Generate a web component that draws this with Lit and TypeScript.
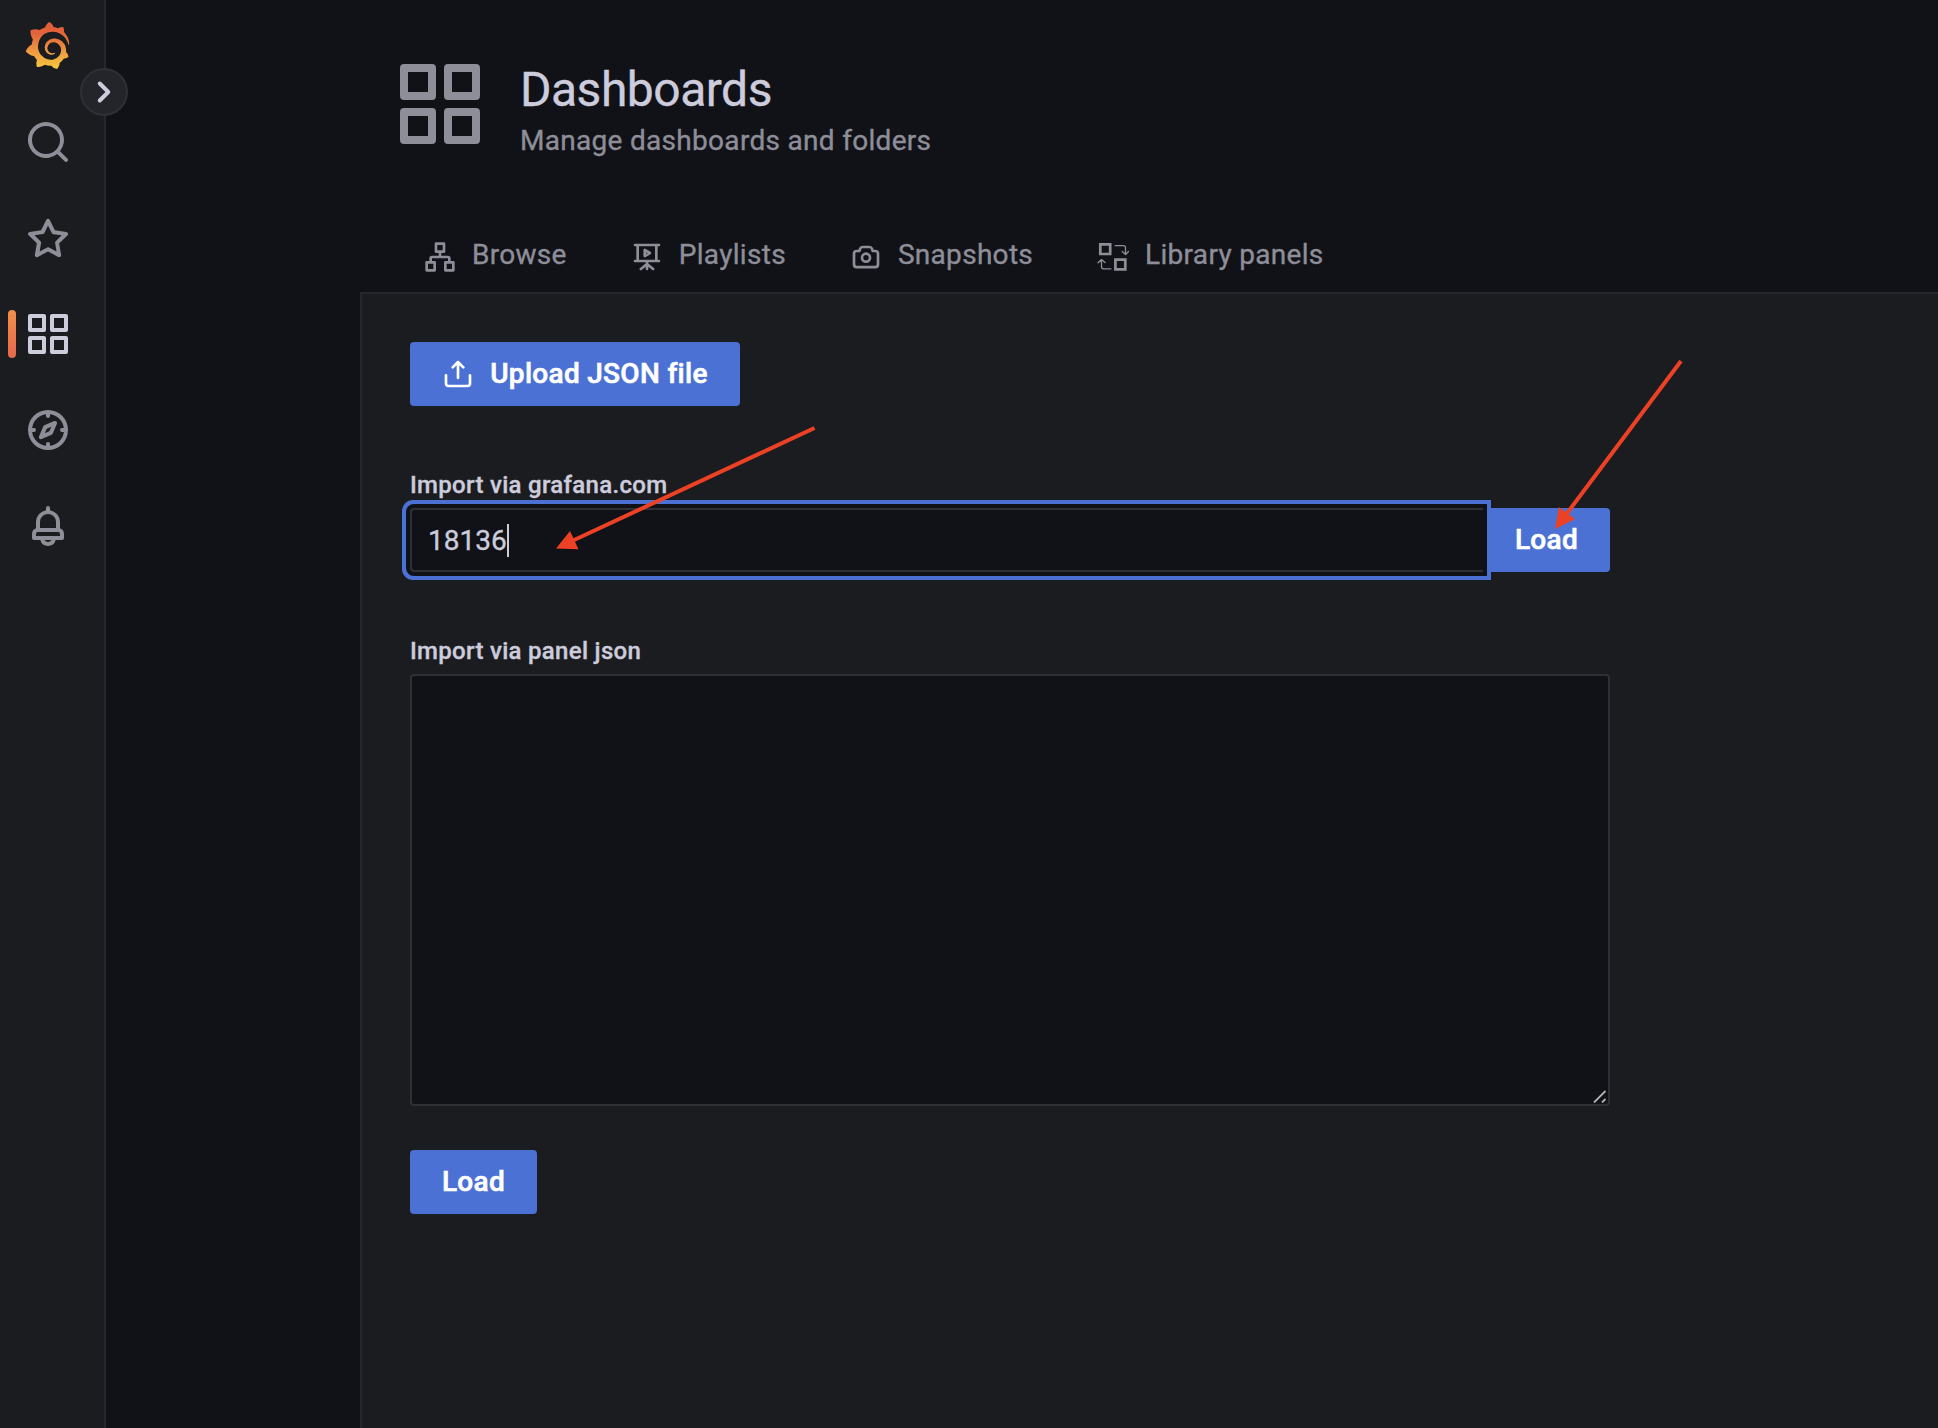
import { LitElement, html, css, svg } from "lit";
import { customElement } from "lit/decorators.js";

const fill = (d: string) => svg`<path fill="currentColor" d=${d} />`;

const SEARCH = fill("M21.71,20.29,18,16.61A9,9,0,1,0,16.61,18l3.68,3.68a1,1,0,0,0,1.42,0A1,1,0,0,0,21.71,20.29ZM11,18a7,7,0,1,1,7-7A7,7,0,0,1,11,18Z");
const STAR = fill("M22,9.67A1,1,0,0,0,21.14,9l-5.69-.83L12.9,3a1,1,0,0,0-1.8,0L8.55,8.16,2.86,9a1,1,0,0,0-.81.68,1,1,0,0,0,.25,1l4.13,4-1,5.68A1,1,0,0,0,6.9,21.44L12,18.77l5.1,2.67a.93.93,0,0,0,.46.12,1,1,0,0,0,.59-.19,1,1,0,0,0,.4-1l-1-5.68,4.13-4A1,1,0,0,0,22,9.67Zm-6.15,4a1,1,0,0,0-.29.88l.72,4.2-3.76-2a1.06,1.06,0,0,0-.94,0l-3.76,2,.72-4.2a1,1,0,0,0-.29-.88l-3-3,4.21-.61a1,1,0,0,0,.76-.55L12,5.7l1.88,3.82a1,1,0,0,0,.76.55l4.21.61Z");
const APPS = fill("M10,13H3a1,1,0,0,0-1,1v7a1,1,0,0,0,1,1h7a1,1,0,0,0,1-1V14A1,1,0,0,0,10,13ZM9,20H4V15H9ZM21,2H14a1,1,0,0,0-1,1v7a1,1,0,0,0,1,1h7a1,1,0,0,0,1-1V3A1,1,0,0,0,21,2ZM20,9H15V4h5Zm1,4H14a1,1,0,0,0-1,1v7a1,1,0,0,0,1,1h7a1,1,0,0,0,1-1V14A1,1,0,0,0,21,13Zm-1,7H15V15h5ZM10,2H3A1,1,0,0,0,2,3v7a1,1,0,0,0,1,1h7a1,1,0,0,0,1-1V3A1,1,0,0,0,10,2ZM9,9H4V4H9Z");
const COMPASS = fill("M12,2A10,10,0,1,0,22,12,10,10,0,0,0,12,2Zm1,17.93V19a1,1,0,0,0-2,0v.93A8,8,0,0,1,4.07,13H5a1,1,0,0,0,0-2H4.07A8,8,0,0,1,11,4.07V5a1,1,0,0,0,2,0V4.07A8,8,0,0,1,19.93,11H19a1,1,0,0,0,0,2h.93A8,8,0,0,1,13,19.93ZM15.14,7.55l-5,2.12a1,1,0,0,0-.52.52l-2.12,5a1,1,0,0,0,.21,1.1,1,1,0,0,0,.7.29.93.93,0,0,0,.4-.08l5-2.12a1,1,0,0,0,.52-.52l2.12-5a1,1,0,0,0-1.31-1.31Zm-2.49,5.1-2.28,1,1-2.28,2.28-1Z");
const BELL = fill("M18,13.18V10a6,6,0,0,0-5-5.91V3a1,1,0,0,0-2,0V4.09A6,6,0,0,0,6,10v3.18A3,3,0,0,0,4,16v2a1,1,0,0,0,1,1H8.14a4,4,0,0,0,7.72,0H19a1,1,0,0,0,1-1V16A3,3,0,0,0,18,13.18ZM8,10a4,4,0,0,1,8,0v3H8Zm4,10a2,2,0,0,1-1.72-1h3.44A2,2,0,0,1,12,20Zm6-3H6V16a1,1,0,0,1,1-1H17a1,1,0,0,1,1,1Z");
const CAMERA = fill("M19,6.5H17.72l-.32-1a3,3,0,0,0-2.84-2H9.44A3,3,0,0,0,6.6,5.55l-.32,1H5a3,3,0,0,0-3,3v8a3,3,0,0,0,3,3H19a3,3,0,0,0,3-3v-8A3,3,0,0,0,19,6.5Zm1,11a1,1,0,0,1-1,1H5a1,1,0,0,1-1-1v-8a1,1,0,0,1,1-1H7a1,1,0,0,0,1-.68l.54-1.64a1,1,0,0,1,.95-.68h5.12a1,1,0,0,1,.95.68l.54,1.64A1,1,0,0,0,17,8.5h2a1,1,0,0,1,1,1Zm-8-9a4,4,0,1,0,4,4A4,4,0,0,0,12,8.5Zm0,6a2,2,0,1,1,2-2A2,2,0,0,1,12,14.5Z");
const UPLOAD = fill("M8.71,7.71,11,5.41V15a1,1,0,0,0,2,0V5.41l2.29,2.3a1,1,0,0,0,1.42,0,1,1,0,0,0,0-1.42l-4-4a1,1,0,0,0-.33-.21,1,1,0,0,0-.76,0,1,1,0,0,0-.33.21l-4,4A1,1,0,1,0,8.71,7.71ZM21,12a1,1,0,0,0-1,1v6a1,1,0,0,1-1,1H5a1,1,0,0,1-1-1V13a1,1,0,0,0-2,0v6a3,3,0,0,0,3,3H19a3,3,0,0,0,3-3V13A1,1,0,0,0,21,12Z");
const ANGLE = fill("M14.83,11.29,10.59,7.05a1,1,0,0,0-1.42,0,1,1,0,0,0,0,1.41L12.71,12,9.17,15.54a1,1,0,0,0,0,1.41,1,1,0,0,0,.71.29,1,1,0,0,0,.71-.29l4.24-4.24A1,1,0,0,0,14.83,11.29Z");
const SITEMAP = svg`<g fill="none" stroke="currentColor" stroke-width="2" stroke-linejoin="round">
  <rect x="9" y="2" width="6" height="6" /><rect x="2" y="16" width="6" height="6" /><rect x="16" y="16" width="6" height="6" />
  <path d="M12 8v4M5 16v-3a1 1 0 0 1 1-1h12a1 1 0 0 1 1 1v3" /></g>`;
const PRESENTATION = svg`<g fill="none" stroke="currentColor" stroke-width="2" stroke-linecap="round" stroke-linejoin="round">
  <path d="M3 3h18M5 3v12M19 3v12M3 15h18M12 15v6M12 17.3L7.4 21M12 17.3l4.600 3.700" /><path d="M10.300 6.700v4.600l3.900-2.300z" /></g>`;
const LIBRARY = svg`<g fill="none" stroke="currentColor">
  <path stroke-width="2.700" d="M3.300 3.400h9.900v9.600h-9.900zM18.400 18.700h9.900v9.600h-9.900z" />
  <path stroke-width="1.300" stroke-linecap="round" stroke-linejoin="round" d="M18.300 4.700h8.200a2 2 0 0 1 2 2v6.500M25.200 10.500l3.400 3 2.900-3M14 27.800h-7.500a2 2 0 0 1-2-2v-6.500M1 21.800l3.500-3.200 3.500 3" /></g>`;
const LOGO = "M23.02 10.59a8.578 8.578 0 0 0-.862-3.034 8.911 8.911 0 0 0-1.789-2.445c.337-1.342-.413-2.505-.413-2.505-1.292-.08-2.113.4-2.416.62-.052-.02-.102-.044-.154-.064-.22-.089-.446-.172-.677-.247-.231-.073-.47-.14-.711-.197a9.867 9.867 0 0 0-.875-.161C14.557.753 12.94 0 12.94 0c-1.804 1.145-2.147 2.744-2.147 2.744l-.018.093c-.098.029-.2.057-.298.088-.138.042-.275.094-.413.143-.138.055-.275.107-.41.166a8.869 8.869 0 0 0-1.557.87l-.063-.029c-2.497-.955-4.716.195-4.716.195-.203 2.658.996 4.33 1.235 4.636a11.608 11.608 0 0 0-.607 2.635C1.636 12.677.953 15.014.953 15.014c1.926 2.214 4.171 2.351 4.171 2.351.003-.002.006-.002.006-.005.285.509.615.994.986 1.446.156.19.32.371.488.548-.704 2.009.099 3.68.099 3.68 2.144.08 3.553-.937 3.849-1.173a9.784 9.784 0 0 0 3.164.501h.08l.055-.003.107-.002.103-.005.003.002c1.01 1.44 2.788 1.646 2.788 1.646 1.264-1.332 1.337-2.653 1.337-2.94v-.058c0-.02-.003-.039-.003-.06.265-.187.52-.387.758-.6a7.875 7.875 0 0 0 1.415-1.7c1.43.083 2.437-.885 2.437-.885-.236-1.49-1.085-2.216-1.264-2.354l-.018-.013-.016-.013a.217.217 0 0 1-.031-.02c.008-.092.016-.18.02-.27.011-.162.016-.323.016-.48v-.253l-.005-.098-.008-.135a1.891 1.891 0 0 0-.01-.13c-.003-.042-.008-.083-.013-.125l-.016-.124-.018-.122a6.215 6.215 0 0 0-2.032-3.73 6.015 6.015 0 0 0-3.222-1.46 6.292 6.292 0 0 0-.85-.048l-.107.002h-.063l-.044.003-.104.008a4.777 4.777 0 0 0-3.335 1.695c-.332.4-.592.84-.768 1.297a4.594 4.594 0 0 0-.312 1.817l.003.091c.005.055.007.11.013.164a3.615 3.615 0 0 0 .698 1.82 3.53 3.53 0 0 0 1.827 1.282c.33.098.66.14.971.137.039 0 .078 0 .114-.002l.063-.003c.02 0 .041-.003.062-.003.034-.002.065-.007.099-.01.007 0 .018-.003.028-.003l.031-.005.06-.008a1.18 1.18 0 0 0 .112-.02c.036-.008.072-.013.109-.024a2.634 2.634 0 0 0 .914-.415c.028-.02.056-.041.085-.065a.248.248 0 0 0 .039-.35.244.244 0 0 0-.309-.06l-.078.042c-.09.044-.184.083-.283.116a2.476 2.476 0 0 1-.475.096c-.028.003-.054.006-.083.006l-.083.002c-.026 0-.054 0-.08-.002l-.102-.006h-.012l-.024.006c-.016-.003-.031-.003-.044-.006-.031-.002-.06-.007-.091-.01a2.59 2.59 0 0 1-.724-.213 2.557 2.557 0 0 1-.667-.438 2.52 2.52 0 0 1-.805-1.475 2.306 2.306 0 0 1-.029-.444l.006-.122v-.023l.002-.031c.003-.021.003-.04.005-.06a3.163 3.163 0 0 1 1.352-2.29 3.12 3.12 0 0 1 .937-.43 2.946 2.946 0 0 1 .776-.101h.06l.07.002.045.003h.026l.07.005a4.041 4.041 0 0 1 1.635.49 3.94 3.94 0 0 1 1.602 1.662 3.77 3.77 0 0 1 .397 1.414l.005.076.003.075c.002.026.002.05.002.075 0 .024.003.052 0 .07v.065l-.002.073-.008.174a6.195 6.195 0 0 1-.08.639 5.1 5.1 0 0 1-.267.927 5.31 5.31 0 0 1-.624 1.13 5.052 5.052 0 0 1-3.237 2.014 4.82 4.82 0 0 1-.649.066l-.039.003h-.287a6.607 6.607 0 0 1-1.716-.265 6.776 6.776 0 0 1-3.4-2.274 6.75 6.75 0 0 1-.746-1.15 6.616 6.616 0 0 1-.714-2.596l-.005-.083-.002-.02v-.056l-.003-.073v-.096l-.003-.104v-.07l.003-.163c.008-.22.026-.45.054-.678a8.707 8.707 0 0 1 .28-1.355c.128-.444.286-.872.473-1.277a7.04 7.04 0 0 1 1.456-2.1 5.925 5.925 0 0 1 .953-.763c.169-.111.343-.213.524-.306.089-.05.182-.091.273-.135.047-.02.093-.042.138-.062a7.177 7.177 0 0 1 .714-.267l.145-.045c.049-.015.098-.026.148-.041.098-.029.197-.052.296-.076.049-.013.1-.02.15-.033l.15-.032.151-.028.076-.013.075-.01.153-.024c.057-.01.114-.013.171-.023l.169-.021c.036-.003.073-.008.106-.01l.073-.008.036-.003.042-.002c.057-.003.114-.008.171-.01l.086-.006h.023l.037-.003.145-.007a7.999 7.999 0 0 1 1.708.125 7.917 7.917 0 0 1 2.048.68 8.253 8.253 0 0 1 1.672 1.09l.09.077.089.078c.06.052.114.107.171.159.057.052.112.106.166.16.052.055.107.107.159.164a8.671 8.671 0 0 1 1.41 1.978c.012.026.028.052.04.078l.04.078.075.156c.023.051.05.1.07.153l.065.15a8.848 8.848 0 0 1 .45 1.34.19.19 0 0 0 .201.142.186.186 0 0 0 .172-.184c.01-.246.002-.532-.024-.856z";

const icon = (body: unknown, cls: string, box = 24) =>
  html`<svg class="icon ${cls}" viewBox="0 0 ${box} ${box}">${body}</svg>`;

@customElement("app-root")
export class AppRoot extends LitElement {
  static styles = css`
    :host {
      display: block;
      font-family: Roboto, "Liberation Sans", sans-serif;
      font-size: 28px;
      letter-spacing: 0.01071em;
      color: #ccccdc;
      -webkit-text-stroke: 0.35px currentColor;
    }
    * { box-sizing: border-box; }
    .page {
      position: relative;
      display: flex;
      width: 1938px;
      height: 1428px;
      overflow: hidden;
      background: #111217;
    }
    .icon { display: block; flex: none; }
    .i32 { width: 32px; height: 32px; }
    .i48 { width: 48px; height: 48px; }
    .i96 { width: 96px; height: 96px; color: #8e8e99; }

    .side {
      position: relative;
      flex: none;
      width: 106px;
      border-right: 2px solid #26272c;
      background: #1b1c20;
      color: #8e8e99;
      padding: 22px 0 0 24px;
    }
    .logo { display: block; width: 47px; height: 47px; }
    .nav { display: flex; flex-direction: column; gap: 48px; margin-top: 49px; }
    .item { position: relative; height: 48px; }
    .on { color: #ccccdc; }
    .on::before {
      content: "";
      position: absolute;
      left: -16px;
      top: 0;
      width: 8px;
      height: 48px;
      border-radius: 4px;
      background: linear-gradient(#f08f4a, #e5684b);
    }
    .toggle {
      position: absolute;
      left: 80px;
      top: 68px;
      width: 48px;
      height: 48px;
      border-radius: 50%;
      border: 2px solid #2f3036;
      background: #24252a;
      color: #ccccdc;
      display: flex;
      align-items: center;
      justify-content: center;
    }
    .angle { width: 48px; height: 48px; }

    .main { flex: 1; display: flex; flex-direction: column; padding-left: 254px; }
    .head { display: flex; height: 152px; padding: 56px 0 0 32px; }
    .titles { margin-left: 32px; }
    h1 {
      margin: 5px 0 0;
      font-size: 48px;
      font-weight: 400;
      line-height: 58px;
      letter-spacing: -0.5px;
    }
    .sub { line-height: 44px; color: #8e8e99; }
    .tabs { display: flex; gap: 64px; height: 140px; padding: 81px 0 0 64px; color: #8e8e99; }
    .tab { display: flex; gap: 16px; line-height: 44px; }
    .tab .icon { margin-top: 8px; }
    .panel {
      flex: 1;
      border: solid #26272c;
      border-width: 2px 0 0 2px;
      background: #1b1c20;
      padding: 48px 0 0 48px;
    }
    .btn {
      display: flex;
      align-items: center;
      flex: none;
      height: 64px;
      width: 127px;
      justify-content: center;
      border-radius: 4px;
      background: #4a71d3;
      color: #fff;
      font-weight: 500;
      line-height: 64px;
      -webkit-text-stroke-width: 0.6px;
    }
    .upload { width: 330px; gap: 16px; }
    .label { font-size: 24px; font-weight: 500; line-height: 32px; }
    .l1 { margin-top: 63px; }
    .l2 { margin-top: 63px; }
    .row { display: flex; width: 1200px; margin-top: 7px; }
    .input {
      position: relative;
      flex: 1;
      display: flex;
      align-items: center;
      height: 64px;
      padding: 0 16px;
      border: 2px solid #2f3036;
      border-right: 0;
      border-radius: 4px 0 0 4px;
      background: #111217;
      box-shadow: 0 0 0 4px #111217, 0 0 0 8px #4a71d3;
      letter-spacing: 0;
    }
    .caret { width: 2px; height: 33px; background: #ccccdc; margin-top: 1px; }
    .row .btn { border-radius: 0 4px 4px 0; }
    .area {
      width: 1200px;
      height: 432px;
      margin: 7px 0 44px;
      border: 2px solid #2f3036;
      border-radius: 4px;
      background: #111217;
      display: flex;
      align-items: flex-end;
      justify-content: flex-end;
      padding: 1px 2px;
    }
    .grip { width: 13px; height: 13px; }
    .arrows { position: absolute; left: 0; top: 0; width: 1938px; height: 1428px; }
  `;

  render() {
    return html`<div class="page">
      <nav class="side">
        <svg class="logo" viewBox="0 0 24 24">
          <defs><linearGradient id="g" x1="0" y1="1" x2="0" y2="0">
            <stop offset="0" stop-color="#f5cb3e" /><stop offset="0.400" stop-color="#ee9640" />
            <stop offset="0.750" stop-color="#e3643a" /><stop offset="1" stop-color="#e05c38" />
          </linearGradient></defs>
          <path fill="url(#g)" d=${LOGO} />
        </svg>
        <div class="nav">
          <div class="item">${icon(SEARCH, "i48")}</div>
          <div class="item">${icon(STAR, "i48")}</div>
          <div class="item on">${icon(APPS, "i48")}</div>
          <div class="item">${icon(COMPASS, "i48")}</div>
          <div class="item">${icon(BELL, "i48")}</div>
        </div>
        <div class="toggle">${icon(ANGLE, "angle")}</div>
      </nav>
      <main class="main">
        <header class="head">
          ${icon(APPS, "i96")}
          <div class="titles">
            <h1>Dashboards</h1>
            <div class="sub">Manage dashboards and folders</div>
          </div>
        </header>
        <div class="tabs">
          <div class="tab">${icon(SITEMAP, "i32")}<span>Browse</span></div>
          <div class="tab">${icon(PRESENTATION, "i32")}<span>Playlists</span></div>
          <div class="tab">${icon(CAMERA, "i32")}<span>Snapshots</span></div>
          <div class="tab">${icon(LIBRARY, "i32", 32)}<span>Library panels</span></div>
        </div>
        <section class="panel">
          <div class="btn upload">${icon(UPLOAD, "i32")}<span>Upload JSON file</span></div>
          <div class="label l1">Import via grafana.com</div>
          <div class="row">
            <div class="input"><span>18136</span><i class="caret"></i></div>
            <div class="btn">Load</div>
          </div>
          <div class="label l2">Import via panel json</div>
          <div class="area">
            <svg class="grip" viewBox="0 0 13 13"><path d="M1 12.500L12.500 1M9 12.500L12.500 9" stroke="#b4b4b4" stroke-width="1.800" /></svg>
          </div>
          <div class="btn">Load</div>
        </section>
      </main>
      <svg class="arrows" viewBox="0 0 1938 1428" fill="#ec4125" stroke="#ec4125">
        <path d="M814.500 428L572 541M1681 361L1565 516" stroke-width="4" />
        <path stroke="none" d="M556 548.500L570 531L578.500 549.300zM1555 529L1559 507L1575 519z" />
      </svg>
    </div>`;
  }
}
